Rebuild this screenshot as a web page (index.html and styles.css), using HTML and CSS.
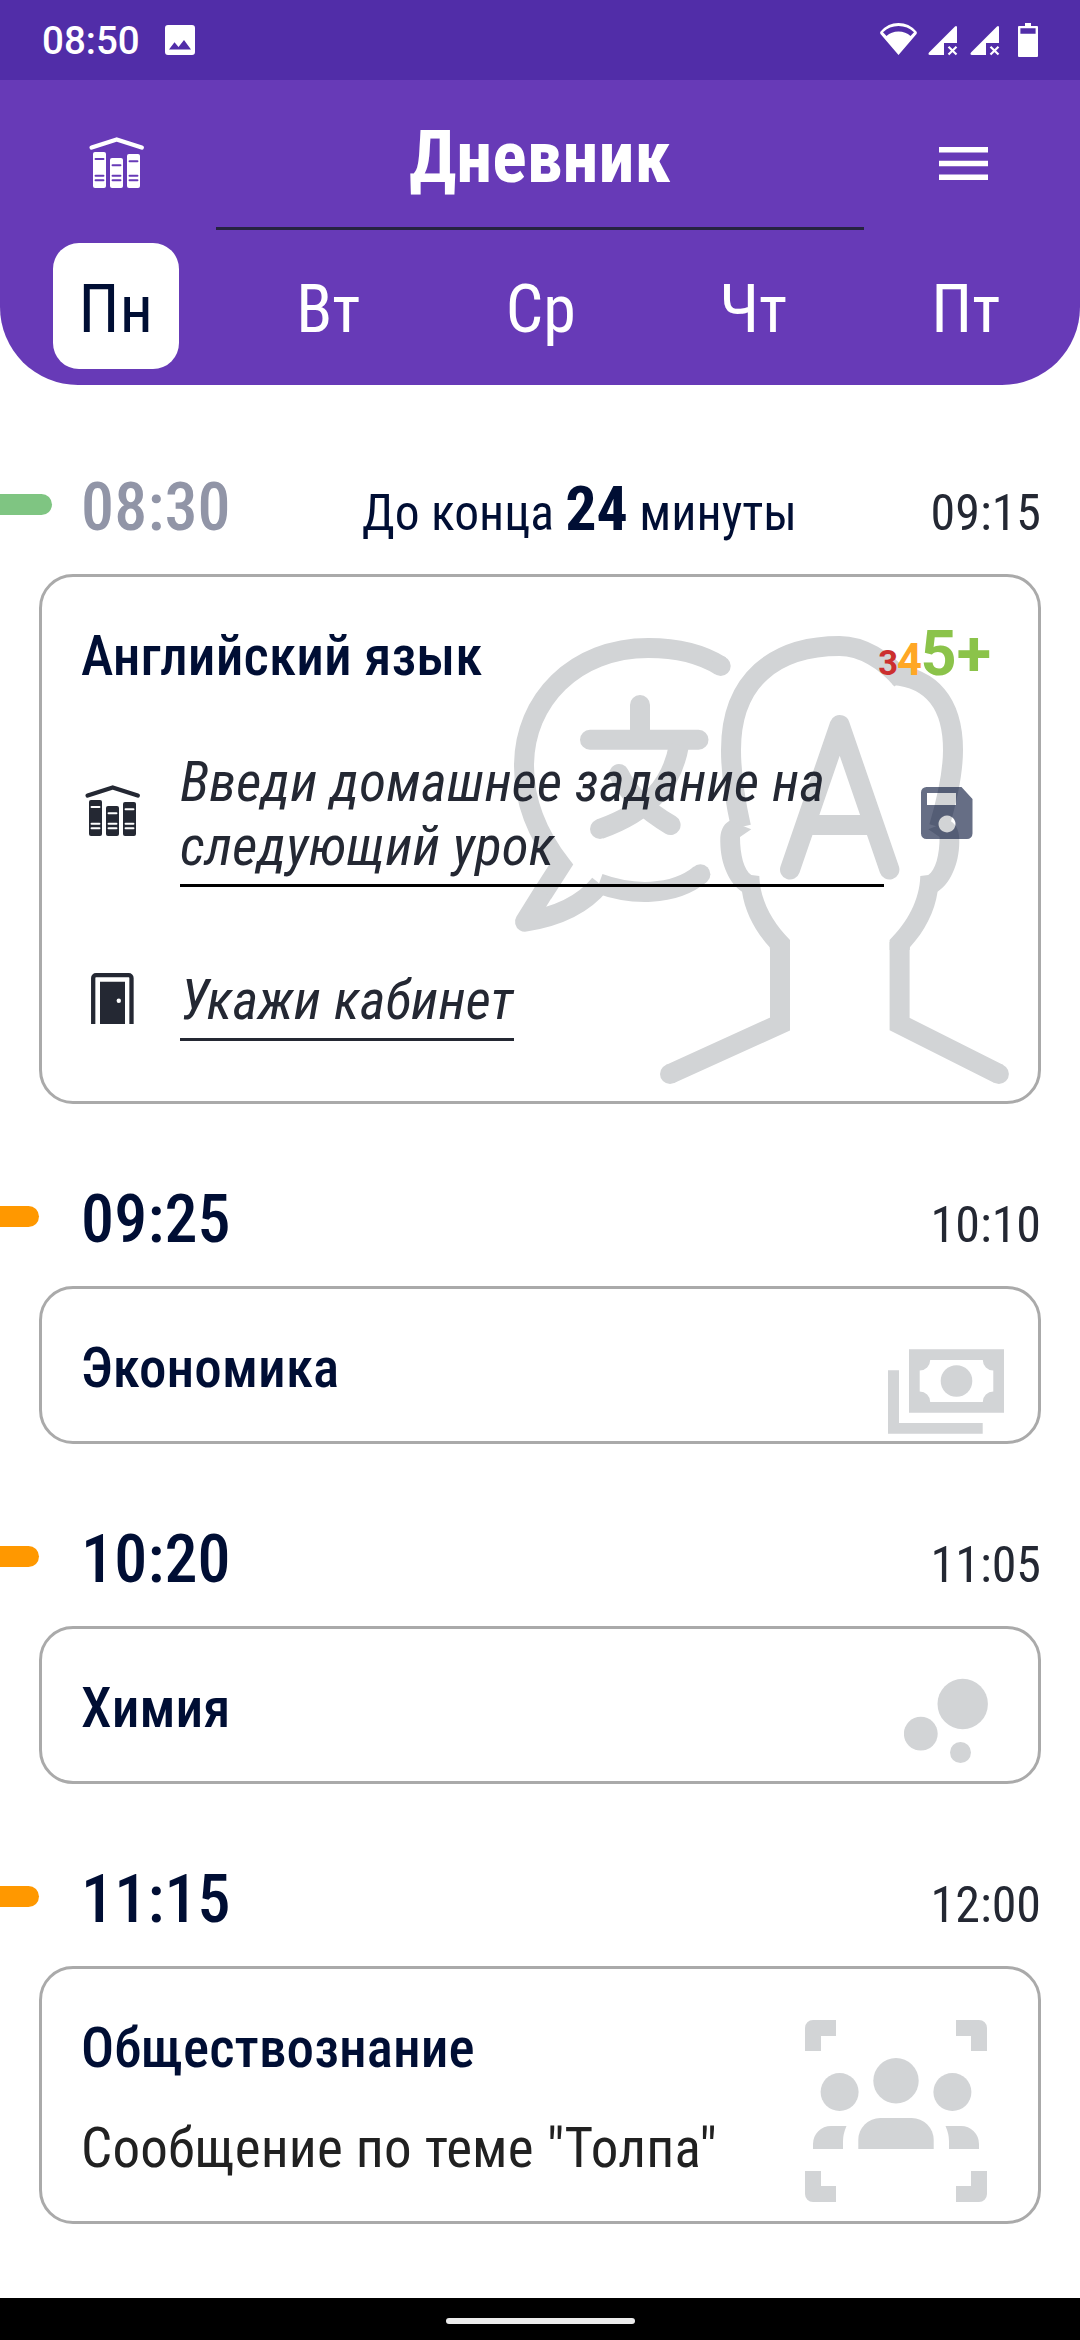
FILE: index.html
```html
<!DOCTYPE html>
<html lang="ru">
<head>
<meta charset="utf-8">
<title>Дневник</title>
<link rel="stylesheet" href="styles.css">
</head>
<body>
<div class="statusbar">
  <span class="clock">08:50</span>
  <svg class="ic-photo" viewBox="0 0 30 30"><path fill="#fff" fill-rule="evenodd" d="M3 0H27a3 3 0 0 1 3 3V27a3 3 0 0 1-3 3H3a3 3 0 0 1-3-3V3a3 3 0 0 1 3-3ZM4 24.5H26L19 15l-5.500 7-4-4.700Z"/></svg>
  <svg class="ic-system" viewBox="880 23 158 34" fill="#fff">
    <path fill-rule="evenodd" d="M898.500 55 880.500 34q-.9-1.500.3-2.700Q888 23 898.500 23t17.700 8.300q1.200 1.200.3 2.700ZM886.500 36q4.800-4.500 12-4.500t12 4.500l3.500-3.700Q907.500 26 898.500 26t-15.500 6.300Z"/>
    <g id="sim"><path d="M957 27V43H944V55H930q-2.500-.5-1-2.500L955 26.500q1.500-1 2 .5Z"/><path d="m948.500 46.800 8 7.700m0-7.700-8 7.700" stroke="#fff" stroke-width="2.200" fill="none"/></g>
    <use href="#sim" x="42"/>
    <path fill-rule="evenodd" d="M1025 23h6v3h6q1 0 1 1V56q0 1-1 1h-18q-1 0-1-1V27q0-1 1-1h6ZM1020.400 28.300v5.400h15.200v-5.400Z"/>
  </svg>
</div>

<header class="header">
  <div class="topbar">
    <svg class="ic-books" viewBox="0 0 56 52"><use href="#books"/></svg>
    <h1 class="title">Дневник</h1>
    <svg class="ic-menu" viewBox="3 6 18 12"><path fill="#fff" d="M3 18h18v-2H3v2zm0-5h18v-2H3v2zm0-7v2h18V6H3z"/></svg>
  </div>
  <nav class="days">
    <span class="day active">Пн</span>
    <span class="day">Вт</span>
    <span class="day">Ср</span>
    <span class="day">Чт</span>
    <span class="day">Пт</span>
  </nav>
</header>

<main class="lessons">
  <div class="head">
    <div class="marker"><i class="pill now"></i></div>
    <span class="start past">08:30</span>
    <span class="hint">До конца <b>24</b> минуты</span>
    <span class="end">09:15</span>
  </div>
  <section class="card open">
    <svg class="bg" viewBox="511 634 500 452" width="500" height="452">
      <g fill="none" stroke="#d2d4d6" stroke-width="20">
        <path d="M720.700 666C700 653 675 648 648.400 648C575 648 524 700 524 766C524 805 540 838 561 865L543 893" />
        <path stroke-linejoin="round" d="M543.500 892L525 921.700C555 917 583 905 600 884"/>
        <path d="M599 883.500C630 895 673 897 700.400 874.300"/>
        <path stroke-linecap="round" d="M640 705V738M590 739.700H698.500M619 774C628 793 645 810 670.600 825"/>
        <path d="M679 745C672 785 648 812 600 829"/>
        <path stroke-linecap="round" stroke-linejoin="round" d="M790 869.500L839.700 725L889.400 869.500"/>
        <path d="M812 825H868"/>
        <path d="M741 827C735 800 731 775 731 750C731 680 775 646 839.700 646C862 646 885 660 902 680"/>
        <path d="M893.500 675C930 678 953 702 953 750C953 775 947 800 939 827"/>
        <path d="M780 942V1024L670 1074M899.600 942V1024L998.900 1074"/>
      </g>
      <g fill="#d2d4d6">
        <circle cx="720.700" cy="666" r="10"/><circle cx="700.400" cy="874.300" r="10"/><circle cx="600" cy="829" r="10"/>
        <circle cx="670" cy="1074" r="10"/><circle cx="998.900" cy="1074" r="10"/>
        <path id="ear" d="M729.500 820.700C722 825 720 833 720.300 842C720.500 865 730 884 742 891.700C745 912 755 931 769.700 947.300L770 950H790V940C772 922 760 900 759.300 876L751.300 875C744 870 740 855 740 837L751.300 829.300Z"/>
        <use href="#ear" transform="translate(1679.600 0) scale(-1 1)"/>
      </g>
    </svg>
    <div class="card-top">
      <h2 class="subject">Английский язык</h2>
      <div class="grades"><span class="g3">3</span><span class="g4">4</span><span class="g5">5+</span></div>
    </div>
    <div class="field homework">
      <svg class="ic-books dark" viewBox="0 0 56 52"><use href="#books"/></svg>
      <p class="input focus">Введи домашнее задание на<br>следующий урок</p>
      <svg class="ic-save" viewBox="0 0 52 52"><path fill="#000e34" fill-opacity=".6" fill-rule="evenodd" d="M5.500 0H40.500L51.500 12V46.500a5.500 5.500 0 0 1-5.500 5.500H5.500A5.500 5.500 0 0 1 0 46.500V5.500A5.500 5.500 0 0 1 5.500 0ZM6 6V18H35V6ZM26 28.500a8.500 8.500 0 1 0 .01 0Z"/></svg>
    </div>
    <div class="field room">
      <svg class="ic-door" viewBox="0 0 43 51"><path fill="none" stroke="#242833" stroke-width="4.300" d="M2.200 51V5a2.800 2.800 0 0 1 2.800-2.800H37.700a2.800 2.800 0 0 1 2.800 2.800V51"/><path fill="#242833" d="M9 8.700H34V51H9Z"/><circle cx="27.800" cy="27.700" r="2.200" fill="#fff"/></svg>
      <p class="input">Укажи кабинет</p>
    </div>
  </section>

  <div class="head">
    <div class="marker"><i class="pill"></i></div>
    <span class="start">09:25</span>
    <span class="end">10:10</span>
  </div>
  <section class="card">
    <svg class="bg money" viewBox="888 1349 116 85" width="116" height="85" fill="#d2d4d6"><path d="M888 1370.300h11V1423h83.700v10.700H888Z"/><path fill-rule="evenodd" d="M909 1349.300h95v63.400h-95ZM930.200 1360a10.500 10.500 0 0 1-10.500 10.500v21a10.500 10.500 0 0 1 10.500 10.500h52.600a10.500 10.500 0 0 1 10.500-10.500v-21a10.500 10.500 0 0 1-10.500-10.500Z"/><circle cx="956.500" cy="1381" r="15.800"/></svg>
    <h2 class="subject">Экономика</h2>
  </section>

  <div class="head">
    <div class="marker"><i class="pill"></i></div>
    <span class="start">10:20</span>
    <span class="end">11:05</span>
  </div>
  <section class="card">
    <svg class="bg chem" viewBox="904 1678 84 85" width="84" height="85" fill="#d2d4d6"><circle cx="962.700" cy="1704" r="25.200"/><circle cx="920.800" cy="1733.700" r="16.900"/><circle cx="960.500" cy="1752.500" r="10.500"/></svg>
    <h2 class="subject">Химия</h2>
  </section>

  <div class="head">
    <div class="marker"><i class="pill"></i></div>
    <span class="start">11:15</span>
    <span class="end">12:00</span>
  </div>
  <section class="card tall">
    <svg class="bg crowd" viewBox="805 2020 182 182" width="182" height="182" fill="#d2d4d6">
      <g id="half"><path d="M805 2051V2028a8 8 0 0 1 8-8H836V2036H821V2051ZM805 2171H821V2186H836V2202H813a8 8 0 0 1-8-8Z"/><circle cx="839.600" cy="2092" r="19"/><path d="M813 2149V2144a18 18 0 0 1 18-18H846.500Q843 2134 843 2141V2149Z"/></g>
      <use href="#half" transform="translate(1792 0) scale(-1 1)"/>
      <circle cx="896" cy="2080.700" r="22.700"/><path d="M858.300 2149V2140a22 22 0 0 1 22-22h31.400a22 22 0 0 1 22 22V2149Z"/>
    </svg>
    <h2 class="subject">Обществознание</h2>
    <p class="note">Сообщение по теме "Толпа"</p>
  </section>
</main>

<div class="navbar"><i class="gesture"></i></div>

<svg width="0" height="0" class="defs"><defs>
  <g id="books">
    <path d="M2.700 10.500 27.700 2.500 52.700 10.500" fill="none" stroke="currentColor" stroke-width="4.400" stroke-linecap="round" stroke-linejoin="round"/>
    <rect x="4" y="15" width="13" height="36" rx="2" fill="currentColor"/>
    <rect x="21" y="21" width="13" height="30" rx="2" fill="currentColor"/>
    <rect x="38" y="17" width="13" height="34" rx="2" fill="currentColor"/>
    <path class="lines" d="M6.500 22h8M6.500 38.700h8M6.500 43.300h8M23.500 28.300h8M23.500 38.700h8M23.500 43.300h8M40.500 24.300h8M40.500 38.700h8M40.500 43.300h8" fill="none" stroke-width="1.900" stroke-linecap="round"/>
  </g>
</defs></svg>
</body>
</html>
```
FILE: styles.css
```css
* { box-sizing: border-box; margin: 0; padding: 0; }
body {
  width: 1080px; height: 2340px;
  display: flex; flex-direction: column;
  background: #fff; color: #000e34;
  font-family: "Roboto Condensed", Roboto, sans-serif;
  font-stretch: 75%;
  overflow: hidden;
}
svg { display: block; flex: none; }
.defs { display: none; }

.statusbar {
  height: 80px; background: #512da8; color: #fff;
  display: flex; align-items: center;
  padding: 0 42px;
}
.clock { width: 97px; font-family: Roboto, sans-serif; font-stretch: 100%; font-size: 38.500px; line-height: 44px; font-weight: 500; padding-top: 2px; white-space: nowrap; }
.ic-photo { width: 30px; height: 30px; margin-left: 26px; }
.ic-system { width: 158px; height: 34px; margin-left: auto; }

.header { height: 305px; background: #673ab7; border-radius: 0 0 78px 78px; color: #fff; }
.topbar { display: grid; grid-template-columns: 216px 648px 216px; height: 150px; }
.ic-books { width: 56px; height: 52px; margin: 57px 0 0 89px; color: #fff; --line: #673ab7; }
.lines { stroke: var(--line); }
.title { border-bottom: 3px solid #262340; text-align: center; font-size: 72px; line-height: 84px; font-weight: 700; padding-top: 36px; }
.ic-menu { width: 49.500px; height: 33px; margin: 67px 0 0 74.500px; }

.days { display: grid; grid-template-columns: repeat(5, 212.500px); padding: 13px 0 0 9.500px; justify-items: center; }
.day { width: 126px; height: 126px; border-radius: 26px; text-align: center; font-size: 66px; line-height: 133px; font-weight: 400; }
.day.active { background: #fff; color: #000e34; }

.lessons { flex: 1; padding-top: 7px; }
.head { height: 182px; display: flex; align-items: baseline; padding: 78px 39px 0 0; }
.marker { width: 81px; align-self: flex-start; padding-top: 24px; }
.pill { display: block; width: 39px; height: 21px; border-radius: 0 10.500px 10.500px 0; background: #ff9800; }
.pill.now { width: 52px; background: #7fc582; }
.start { width: 149px; font-size: 66px; line-height: 76px; font-weight: 500; letter-spacing: .2px; }
.start.past { color: #9195a7; }
.hint { font-size: 49.500px; line-height: 60px; margin-left: 132px; }
.hint b { font-size: 62px; line-height: 60px; font-weight: 700; }
.end { font-size: 50px; line-height: 60px; color: #242833; margin-left: auto; }

.card { position: relative; height: 158px; margin: 0 39px; border: 3px solid #aaa; border-radius: 34px; padding: 47px 40px 0 39px; }
.card.open { height: 530px; }
.card.tall { height: 258px; }
.bg { position: absolute; left: 469px; top: 57px; }
.bg.money { left: 846px; top: 60px; }
.bg.chem { left: 862px; top: 49px; }
.bg.crowd { left: 763px; top: 51px; }
.subject { position: relative; font-size: 55px; line-height: 64px; font-weight: 550; letter-spacing: .1px; }
.card-top { display: flex; justify-content: space-between; align-items: flex-start; position: relative; height: 64px; padding-right: 7px; }
.grades { font-family: Roboto, sans-serif; font-stretch: 100%; font-weight: 700; line-height: 64px; display: flex; align-items: baseline; height: 64px; margin-top: -2px; }
.g3 { font-size: 34.500px; color: #cc2f2f; margin-right: -1px; }
.g4 { font-size: 43.500px; color: #ffa726; margin-right: -1.500px; }
.g5 { font-size: 63px; color: #8bc34a; }

.field { position: relative; display: flex; align-items: flex-start; padding-left: 1px; }
.homework { margin-top: 62px; }
.ic-books.dark { color: #242833; --line: #fff; margin: 35px 39px 0 3px; }
.input { font-size: 55px; line-height: 64px; font-style: italic; letter-spacing: .2px; color: #242833; border-bottom: 3px solid #242833; padding-bottom: 6px; }
.input.focus { width: 704px; border-color: #000; }
.ic-save { width: 52px; height: 52px; margin: 37px 0 0 37px; }
.room { margin-top: 81px; }
.ic-door { width: 43px; height: 51px; margin: 5px 46px 0 9px; }
.note { position: relative; font-size: 55px; line-height: 64px; letter-spacing: .2px; color: #212121; margin-top: 36px; }

.navbar { height: 42px; background: #000; display: flex; justify-content: center; align-items: center; padding-top: 4px; }
.gesture { width: 189px; height: 6px; border-radius: 3px; background: #ebebeb; }
```
